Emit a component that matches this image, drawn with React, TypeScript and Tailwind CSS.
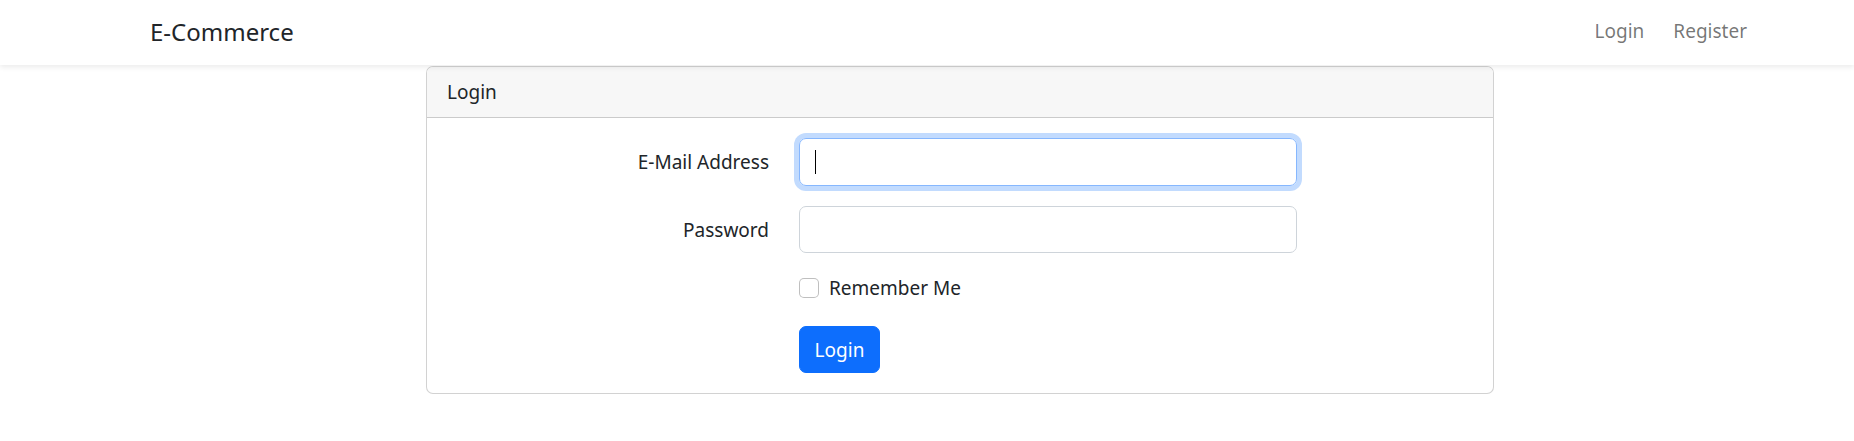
export default function App() {
  return (
    <div className="min-h-[441px] bg-white font-['Noto_Sans',sans-serif] text-[19px] leading-[30px] text-[#212529]">
      {/* Navbar */}
      <nav className="relative z-10 flex h-[65px] items-center justify-between bg-white pb-[3px] pl-[150px] pr-[97px] shadow-[0_2.5px_5px_rgba(0,0,0,0.075)]">
        <a className="text-[24px] leading-[37px] text-[#212529]">E-Commerce</a>
        <div className="flex items-center gap-[9px]">
          <a className="px-[10px] text-black/55">Login</a>
          <a className="px-[10px] text-black/55">Register</a>
        </div>
      </nav>

      {/* Login card */}
      <main className="pl-[426px] pt-px">
        <div className="w-[1068px] overflow-hidden rounded-[7px] border border-black/[.175] bg-white">
          <div className="flex h-[51px] items-center border-b border-black/[.175] bg-[#f7f7f7] px-[20px]">Login</div>
          <form className="p-[20px]">
            <div className="mb-[20px] flex items-center">
              <label className="w-[322px] text-right">E-Mail Address</label>
              <div className="relative ml-[30px]">
                <input
                  type="email"
                  className="block h-[48px] w-[498px] rounded-[7px] border border-[#86b7fe] px-[15px] outline-none ring-[5px] ring-[#c2dbfe]"
                />
                <span className="absolute left-[16px] top-[12px] h-[24px] w-px bg-black" />
              </div>
            </div>
            <div className="mb-[20px] flex items-center">
              <label className="w-[322px] text-right">Password</label>
              <input
                type="password"
                className="ml-[30px] block h-[47px] w-[498px] rounded-[7px] border border-[#ced4da] px-[15px] outline-none"
              />
            </div>
            <div className="mb-[23px] flex items-center pl-[352px]">
              <span className="h-[20px] w-[20px] rounded-[5px] border border-black/25 bg-white" />
              <span className="ml-[10px]">Remember Me</span>
            </div>
            <div className="pl-[352px]">
              <button
                type="button"
                className="h-[47px] w-[81px] rounded-[7px] border border-[#0d6efd] bg-[#0d6efd] text-white"
              >
                Login
              </button>
            </div>
          </form>
        </div>
      </main>
    </div>
  )
}
